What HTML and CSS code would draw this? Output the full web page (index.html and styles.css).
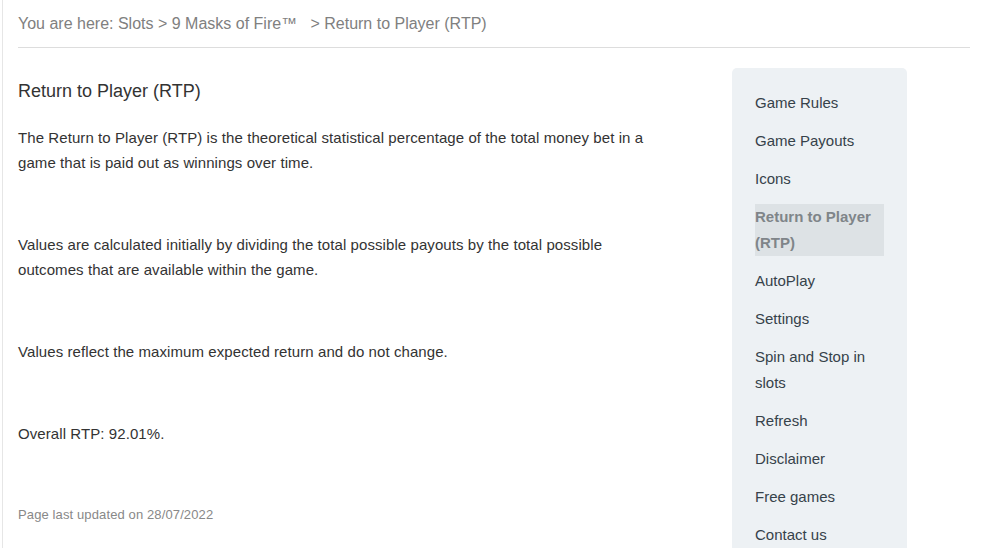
FILE: index.html
```html
<!DOCTYPE html>
<html>
<head>
	<title>Return to Player (RTP)</title>
	<meta http-equiv="content-type" content="text/html;charset=utf-8" />
	<link rel="stylesheet" href="styles.css">
</head>
<body>
<div id="page">

	<div class="breadcrumb">
		You are here: <a href="#">Slots</a> &gt; <a href="#">9 Masks of Fire&trade;</a>&nbsp;&nbsp; &gt; Return to Player (RTP)
	</div>

	<div class="main">

		<div class="content">
			<h1>Return to Player (RTP)</h1>
			<p>The Return to Player (RTP) is the theoretical statistical percentage of the total money bet in a game that is paid out as winnings over time.</p>
			<p>Values are calculated initially by dividing the total possible payouts by the total possible outcomes that are available within the game.</p>
			<p>Values reflect the maximum expected return and do not change.</p>
			<p>Overall RTP: 92.01%.</p>

			<p class="updated">Page last updated on 28/07/2022</p>
		</div>  <!-- end content -->

		<div class="sidebar">
			<ul class="topics">
				<li><a href="#">Game Rules</a></li>
				<li><a href="#">Game Payouts</a></li>
				<li><a href="#">Icons</a></li>
				<li class="current">Return to Player (RTP)</li>
				<li><a href="#">AutoPlay</a></li>
				<li><a href="#">Settings</a></li>
				<li><a href="#">Spin and Stop in slots</a></li>
				<li><a href="#">Refresh</a></li>
				<li><a href="#">Disclaimer</a></li>
				<li><a href="#">Free games</a></li>
				<li><a href="#">Contact us</a></li>
			</ul>
		</div>  <!-- end sidebar -->

	</div>  <!-- end main -->

</div>
</body>
</html>
```

FILE: styles.css
```css
/* Reset */

* { margin: 0; padding: 0; }

html, body {
	height: 100%;
}

body {
	background-color: white;
	font-family: "Liberation Sans", Arial, sans-serif;
	color: #333333;
}

a {
	color: inherit;
	text-decoration: none;
}


/* Page */

#page {
	min-height: 100%;
	margin-left: 2px;
	border-left: solid 1px #e6e6e6;
	padding-left: 15px;
	padding-right: 14px;
}


/* Breadcrumb */

.breadcrumb {
	font-size: 16px;
	color: #808080;
	padding-top: 15px;
	padding-bottom: 14px;
	border-bottom: solid 1px #dddddd;
}


/* Main */

.main {
	display: flex;
	align-items: flex-start;
	gap: 59px;
}

.content {
	width: 640px;
	flex: none;
	padding-top: 33px;
	margin-right: 15px;
}

.content h1 {
	font-size: 18px;
	font-weight: normal;
	margin-bottom: 23px;
}

.content p {
	font-size: 15px;
	letter-spacing: 0.08px;
	line-height: 25px;
	margin-bottom: 57px;
}

.content p.updated {
	font-size: 13px;
	letter-spacing: 0.12px;
	line-height: 15px;
	color: #888888;
	margin-top: 61px;
	margin-bottom: 30px;
}


/* Sidebar */

.sidebar {
	width: 175px;
	margin-top: 20px;
	min-height: 520px;
	background-color: #edf1f4;
	border-radius: 5px 5px 0 0;
	padding: 22px 23px 10px 23px;
	box-sizing: border-box;
}

.topics {
	list-style-type: none;
}

.topics li {
	font-size: 15px;
	line-height: 26px;
	color: #36424a;
	margin-bottom: 12px;
}

.topics li.current {
	font-weight: bold;
	color: #7f8589;
	background-color: #dde2e5;
}
```
